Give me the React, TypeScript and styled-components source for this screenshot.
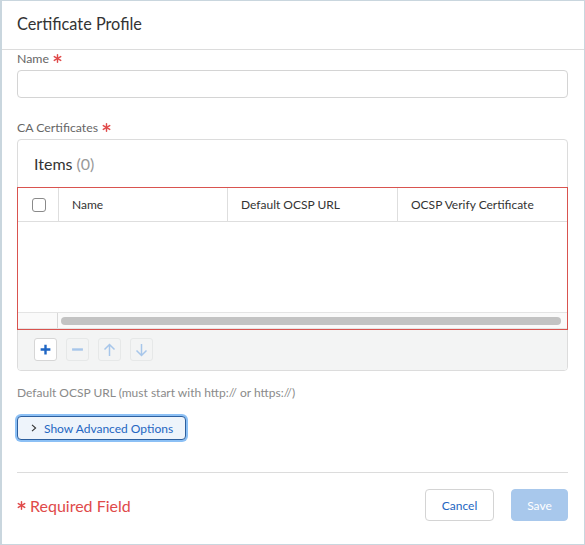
import React from "react";
import styled, { createGlobalStyle } from "styled-components";

const GlobalStyle = createGlobalStyle`
  html, body { margin: 0; padding: 0; background: #fff; }
  body { font-family: Lato, "Open Sans", "Liberation Sans", sans-serif; color: #333; }
  * { box-sizing: border-box; }
`;

const Dialog = styled.div`
  width: 585px;
  height: 545px;
  border: 1px solid #c9d6de;
  border-left-width: 2px;
  display: flex;
  flex-direction: column;
  background: #fff;
`;

const Header = styled.div`
  height: 49px;
  flex: none;
  display: flex;
  align-items: center;
  padding: 0 15px 3px;
  border-bottom: 1px solid #dcdcdc;
  font-size: 16.3px;
  color: #333;
`;

const Body = styled.div`
  padding: 0 16px 0 15px;
  display: flex;
  flex-direction: column;
`;

const Label = styled.div<{ $mt?: number }>`
  display: flex;
  align-items: center;
  height: 16px;
  font-size: 12.3px;
  color: #666;
  margin-top: ${(p) => p.$mt ?? 0}px;
  margin-bottom: 4px;
`;

const Star = styled.span`
  display: flex;
  margin-left: 4px;
`;

const TextInput = styled.input`
  height: 28px;
  width: 100%;
  border: 1px solid #d4d4d4;
  border-radius: 4px;
  outline: none;
  font-family: inherit;
  font-size: 12px;
  padding: 0 8px;
`;

const Panel = styled.div`
  border: 1px solid #dcdcdc;
  border-radius: 4px;
  display: flex;
  flex-direction: column;
`;

const PanelTitle = styled.div`
  height: 47px;
  display: flex;
  align-items: center;
  padding: 0 16px 0;
  font-size: 16px;
  color: #333;
`;

const Count = styled.span`
  color: #999;
  margin-left: 4px;
`;

const Grid = styled.div`
  position: relative;
  border: 1px solid #d9534f;
  margin: 0 -1px;
  display: flex;
  flex-direction: column;
  background: #fff;
`;

const HeadRow = styled.div`
  display: grid;
  grid-template-columns: 40px 169px 170px 1fr;
  height: 34px;
  border-bottom: 1px solid #dedede;
`;

const HeadCell = styled.div<{ $center?: boolean }>`
  display: flex;
  align-items: center;
  justify-content: ${(p) => (p.$center ? "center" : "flex-start")};
  padding: ${(p) => (p.$center ? "0" : "0 13px")};
  font-size: 12px;
  color: #333;
  & + & { border-left: 1px solid #dedede; }
`;

const CheckBox = styled.span`
  width: 14px;
  height: 14px;
  border: 1px solid #8a8a8a;
  border-radius: 3px;
  background: #fff;
  margin-left: 1px;
`;

const EmptyBody = styled.div`
  height: 90px;
`;

const ScrollRow = styled.div`
  display: grid;
  grid-template-columns: 40px 1fr;
  height: 17px;
  border-top: 1px solid #e4e4e4;
  border-bottom: 1px solid #e4e4e4;
  background: #fafafa;
`;

const ScrollCorner = styled.div`
  border-right: 1px solid #d8d8d8;
`;

const ScrollTrack = styled.div`
  display: flex;
  align-items: center;
  padding: 0 6px 0 3px;
`;

const Thumb = styled.div`
  height: 8px;
  flex: 1;
  border-radius: 4px;
  background: #c3c3c3;
`;

const Toolbar = styled.div`
  height: 40px;
  background: #f3f4f4;
  border-radius: 0 0 3px 3px;
  display: flex;
  align-items: center;
  gap: 9px;
  padding: 0 16px 1px;
`;

const ToolButton = styled.button<{ $enabled?: boolean }>`
  width: 23px;
  height: 23px;
  padding: 0;
  border-radius: 3px;
  border: 1px solid ${(p) => (p.$enabled ? "#d6d6d6" : "#e6e8e8")};
  background: ${(p) => (p.$enabled ? "#fff" : "#f3f4f4")};
  display: flex;
  align-items: center;
  justify-content: center;
  cursor: ${(p) => (p.$enabled ? "pointer" : "default")};
`;

const Hint = styled.div`
  margin-top: 14px;
  font-size: 12px;
  line-height: 16px;
  color: #8a8a8a;
`;

const AdvancedButton = styled.button`
  margin-top: 15px;
  align-self: flex-start;
  width: 169px;
  height: 24px;
  border-radius: 4px;
  border: 1px solid #2d5f9e;
  box-shadow: 0 0 0 2px #8cc0f5;
  background: #eef4fb;
  color: #2466c2;
  font-family: inherit;
  font-size: 12px;
  display: flex;
  align-items: center;
  gap: 7px;
  padding: 0 0 0 13px;
`;

const Chevron = styled.span`
  display: flex;
`;

const Divider = styled.div`
  margin-top: 32px;
  border-top: 1px solid #dcdcdc;
`;

const Footer = styled.div`
  display: flex;
  align-items: center;
  padding-top: 16px;
`;

const Required = styled.div`
  flex: 1;
  color: #e04a4a;
  font-size: 16px;
  display: flex;
  align-items: center;
  gap: 4px;
`;

const FooterButton = styled.button<{ $primary?: boolean }>`
  height: 32px;
  border-radius: 4px;
  font-family: inherit;
  font-size: 12px;
  padding: 0;
  border: 1px solid ${(p) => (p.$primary ? "#a8c8ec" : "#d4d4d4")};
  background: ${(p) => (p.$primary ? "#a8c8ec" : "#fff")};
  color: ${(p) => (p.$primary ? "#fff" : "#2466c2")};
  width: ${(p) => (p.$primary ? "57px" : "69px")};
  margin-left: ${(p) => (p.$primary ? "17px" : "0")};
`;

const StarIcon = ({ size = 9 }: { size?: number }) => (
  <svg width={size} height={size} viewBox="0 0 10 10" style={{ display: "block" }}>
    <g stroke="#e04a4a" strokeWidth="1.6" strokeLinecap="round">
      <line x1="5" y1="0.8" x2="5" y2="9.2" />
      <line x1="1.4" y1="2.9" x2="8.6" y2="7.1" />
      <line x1="1.4" y1="7.1" x2="8.6" y2="2.9" />
    </g>
  </svg>
);

const PlusIcon = () => (
  <svg width="13" height="13" viewBox="0 0 12 12">
    <path d="M6 1.5v9M1.5 6h9" stroke="#1f66c4" strokeWidth="2.2" />
  </svg>
);

const MinusIcon = () => (
  <svg width="13" height="13" viewBox="0 0 12 12">
    <path d="M1 6h10" stroke="#a7c6ea" strokeWidth="2.2" />
  </svg>
);

const ArrowIcon = ({ down }: { down?: boolean }) => (
  <svg width="13" height="14" viewBox="0 0 12 14" style={{ transform: down ? "rotate(180deg)" : undefined }}>
    <path d="M6 13V1.5M1 6.5L6 1.5 11 6.5" stroke="#a7c6ea" strokeWidth="1.5" fill="none" />
  </svg>
);

const ChevronIcon = () => (
  <svg width="6" height="8" viewBox="0 0 6 8">
    <path d="M1 0.8L4.6 4 1 7.2" stroke="#333" strokeWidth="1.1" fill="none" />
  </svg>
);

export default function App() {
  return (
    <>
      <GlobalStyle />
      <Dialog>
        <Header>Certificate Profile</Header>
        <Body>
          <Label>
            Name
            <Star>
              <StarIcon />
            </Star>
          </Label>
          <TextInput />
          <Label $mt={21}>
            CA Certificates
            <Star>
              <StarIcon />
            </Star>
          </Label>
          <Panel>
            <PanelTitle>
              Items<Count>(0)</Count>
            </PanelTitle>
            <Grid>
              <HeadRow>
                <HeadCell $center>
                  <CheckBox />
                </HeadCell>
                <HeadCell>Name</HeadCell>
                <HeadCell>Default OCSP URL</HeadCell>
                <HeadCell>OCSP Verify Certificate</HeadCell>
              </HeadRow>
              <EmptyBody />
              <ScrollRow>
                <ScrollCorner />
                <ScrollTrack>
                  <Thumb />
                </ScrollTrack>
              </ScrollRow>
            </Grid>
            <Toolbar>
              <ToolButton $enabled>
                <PlusIcon />
              </ToolButton>
              <ToolButton>
                <MinusIcon />
              </ToolButton>
              <ToolButton>
                <ArrowIcon />
              </ToolButton>
              <ToolButton>
                <ArrowIcon down />
              </ToolButton>
            </Toolbar>
          </Panel>
          <Hint>Default OCSP URL (must start with http:// or https://)</Hint>
          <AdvancedButton>
            <Chevron>
              <ChevronIcon />
            </Chevron>
            Show Advanced Options
          </AdvancedButton>
          <Divider />
          <Footer>
            <Required>
              <StarIcon size={9} />
              Required Field
            </Required>
            <FooterButton>Cancel</FooterButton>
            <FooterButton $primary>Save</FooterButton>
          </Footer>
        </Body>
      </Dialog>
    </>
  );
}
